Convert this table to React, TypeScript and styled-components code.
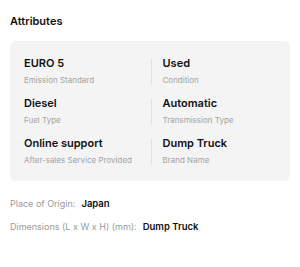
import React from "react";
import styled, { createGlobalStyle } from "styled-components";

const Global = createGlobalStyle`
  html, body { margin: 0; padding: 0; background: #fff; }
  body { font-family: Inter, "Noto Sans", sans-serif; color: #111; }
`;

const Page = styled.div`
  padding: 14px 10px;
  width: 280px;
`;

const Title = styled.h2`
  margin: 0 0 12px;
  font-size: 11px;
  line-height: 15px;
  font-weight: 600;
  color: #111;
`;

const Card = styled.div`
  background: #f4f4f4;
  border-radius: 6px;
  padding: 15px 12px 15px 14px;
  display: grid;
  grid-template-columns: 1fr auto 1fr;
  column-gap: 11px;
  row-gap: 10px;
`;

const Item = styled.div`
  display: flex;
  flex-direction: column;
  gap: 4px;
`;

const Value = styled.div`
  font-size: 11px;
  line-height: 15px;
  font-weight: 600;
  color: #111;
  white-space: nowrap;
`;

const Label = styled.div`
  font-size: 8px;
  line-height: 11px;
  color: #a3a3a3;
  white-space: nowrap;
`;

const Divider = styled.div`
  width: 1px;
  height: 25px;
  background: #e0e0e0;
  align-self: center;
`;

const Details = styled.div`
  margin-top: 17px;
  display: flex;
  flex-direction: column;
  gap: 10.5px;
`;

const DetailRow = styled.div`
  display: flex;
  align-items: baseline;
  gap: 6px;
  line-height: 12px;
`;

const DetailLabel = styled.span`
  font-size: 9px;
  color: #9a9a9a;
`;

const DetailValue = styled.span`
  font-size: 9.5px;
  color: #111;
  font-weight: 600;
`;

const rows: [string, string, string, string][] = [
  ["EURO 5", "Emission Standard", "Used", "Condition"],
  ["Diesel", "Fuel Type", "Automatic", "Transmission Type"],
  ["Online support", "After-sales Service Provided", "Dump Truck", "Brand Name"],
];

const details: [string, string][] = [
  ["Place of Origin:", "Japan"],
  ["Dimensions (L x W x H) (mm):", "Dump Truck"],
];

export default function App() {
  return (
    <Page>
      <Global />
      <Title>Attributes</Title>
      <Card>
        {rows.map(([v1, l1, v2, l2]) => (
          <React.Fragment key={v1}>
            <Item>
              <Value>{v1}</Value>
              <Label>{l1}</Label>
            </Item>
            <Divider />
            <Item>
              <Value>{v2}</Value>
              <Label>{l2}</Label>
            </Item>
          </React.Fragment>
        ))}
      </Card>
      <Details>
        {details.map(([l, v]) => (
          <DetailRow key={l}>
            <DetailLabel>{l}</DetailLabel>
            <DetailValue>{v}</DetailValue>
          </DetailRow>
        ))}
      </Details>
    </Page>
  );
}
